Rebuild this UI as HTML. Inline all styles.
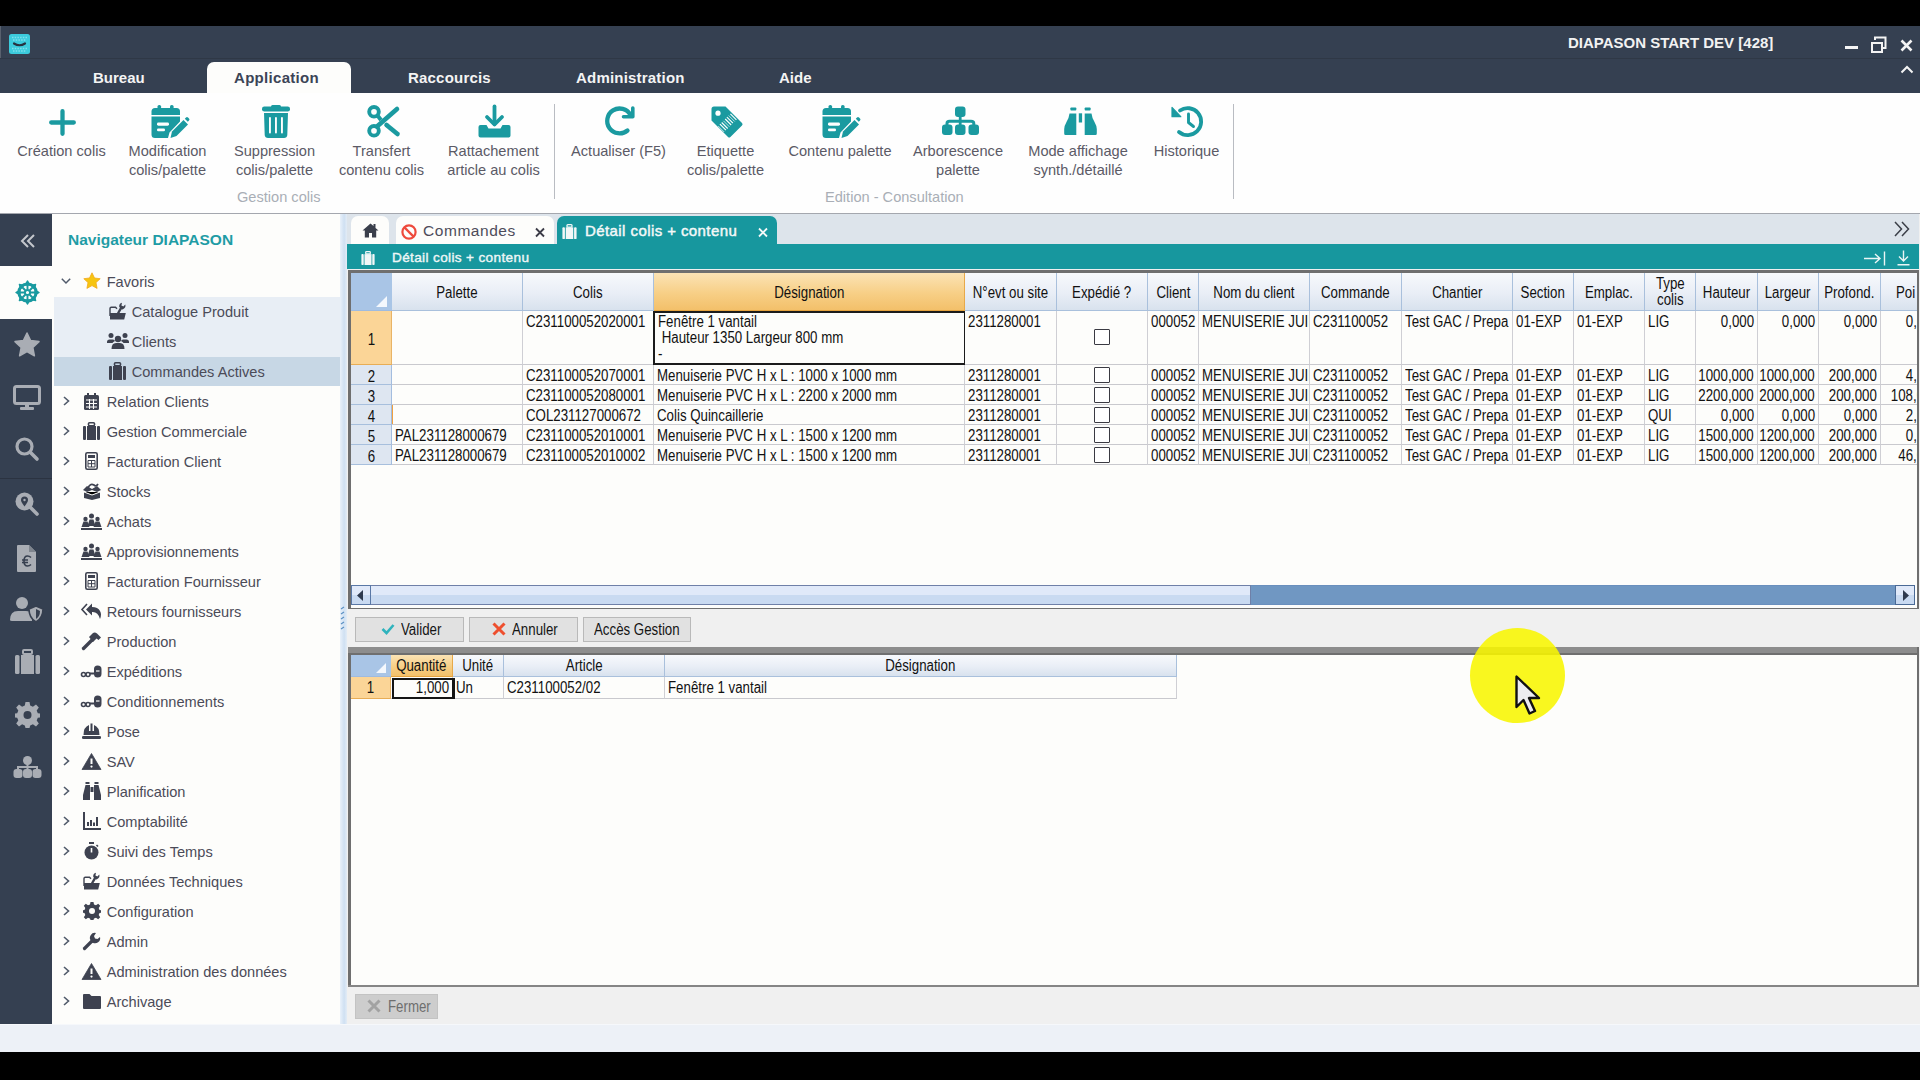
<!DOCTYPE html>
<html><head><meta charset="utf-8">
<style>
*{box-sizing:border-box;margin:0;padding:0}
html,body{width:1920px;height:1080px;overflow:hidden;background:#000;font-family:"Liberation Sans",sans-serif}
.a{position:absolute}
.t{position:absolute;white-space:nowrap;line-height:1}
svg{position:absolute;overflow:visible}
/* title */
#title{left:0;top:26px;width:1920px;height:32px;background:#354051}
#menu{left:0;top:58px;width:1920px;height:35px;background:#354051;border-top:1px solid #2f3846}
.mt{color:#f4f4f4;font-weight:bold;font-size:15px}
#ribbon{left:0;top:93px;width:1920px;height:121px;background:#fefefe;border-bottom:1px solid #a4a7ae}
.rl{color:#5b5a66;font-size:14.6px;text-align:center;line-height:19px;white-space:nowrap;position:absolute}
.rg{color:#a9aeb6;font-size:14.6px;position:absolute;white-space:nowrap;line-height:1}
.rsep{position:absolute;width:1px;background:#b9bcc2}
/* sidebar */
#side{left:0;top:214px;width:52px;height:810px;background:#354051}
#nav{left:52px;top:214px;width:288px;height:810px;background:#fdfdfb}
.nt{position:absolute;color:#4b4b58;font-size:14.6px;white-space:nowrap;line-height:1}
.chev{position:absolute;width:11px;height:11px}
/* content */
#split{left:340px;top:214px;width:7px;height:810px;background:linear-gradient(90deg,#e9f1fa,#cfe0f2 60%,#e3ecf6)}
#content{left:347px;top:214px;width:1573px;height:810px;background:#f0f0f0}
#tabs{left:347px;top:214px;width:1573px;height:30px;background:#dde4eb}
#thead{left:347px;top:244px;width:1573px;height:25px;background:#17979e}
.frame{position:absolute;border:3px solid #6e6e6e;border-right-width:2px;border-bottom-width:3px;background:#fdfdfb}
.gh{position:absolute;background:linear-gradient(#f7f9fc,#e9eef6 55%,#d8e2ee);border-right:1px solid #a9c0dc;border-bottom:1px solid #a9c0dc;color:#111;font-size:16px;text-align:center;white-space:nowrap;overflow:hidden}
.gho{position:absolute;background:linear-gradient(#fbe3b5,#f7cf86 55%,#f3c06a);border-right:1px solid #e7a94a;border-bottom:1px solid #e5a33e;color:#111;font-size:16px;text-align:center;white-space:nowrap;overflow:hidden}
.rh{position:absolute;background:#dee6f1;border-right:1px solid #a3bddf;border-bottom:1px solid #a7bfdd;color:#111;font-size:16px;text-align:center}
.rho{position:absolute;background:#fbd597;border-right:1px solid #e9b466;border-bottom:1px solid #e8ad55;color:#111;font-size:16px;text-align:center}
.c{position:absolute;border-right:1px solid #cfcfd4;border-bottom:1px solid #c9c9ce;color:#111;font-size:16px;white-space:nowrap;overflow:hidden;padding-left:3px;background:#fdfdfb}
.r{text-align:right;padding-right:3px;padding-left:0}
.btn{position:absolute;background:#e1e1e1;border:1px solid #b9b9b9;color:#111;font-size:13px;white-space:nowrap}
.sx{display:inline-block;transform:scaleX(.83)}
.cb{position:absolute;width:16px;height:16px;border:1.5px solid #3a3a42;border-radius:1px;background:#fff}
</style></head><body>

<!-- TITLE BAR -->
<div id="title" class="a"></div>
<div class="a" style="left:0;top:26px;width:1px;height:67px;background:#59616e"></div>
<svg style="left:9px;top:34px" width="21" height="20" viewBox="0 0 21 20"><rect x="0" y="0" width="21" height="20" rx="2.5" fill="#3ccbdc"/><path d="M3 3.5H18M4 6H17M3 14.5H18M4 17H17" stroke="#7fe0ec" stroke-width="1.3" stroke-dasharray="1.5 1.2"/><path d="M5 9.5Q10.5 13 16 9.5" stroke="#283240" stroke-width="2.2" fill="none" stroke-linecap="round"/></svg>
<div class="t" style="left:1568px;top:35px;color:#f2f2f2;font-weight:bold;font-size:15px">DIAPASON START DEV [428]</div>
<div class="a" style="left:1845px;top:46px;width:13px;height:3px;background:#f4f4f4"></div>
<svg style="left:1871px;top:36px" width="16" height="18" viewBox="0 0 16 18"><rect x="1" y="7" width="10" height="9" fill="none" stroke="#f4f4f4" stroke-width="2"/><path d="M4 4V1.5h10.5V12H11" fill="none" stroke="#f4f4f4" stroke-width="2"/></svg>
<svg style="left:1900px;top:39px" width="13" height="13" viewBox="0 0 13 13"><path d="M1.5 1.5L11.5 11.5M11.5 1.5L1.5 11.5" stroke="#f4f4f4" stroke-width="2.6"/></svg>

<!-- MENU -->
<div id="menu" class="a"></div>
<div class="a" style="left:207px;top:62px;width:144px;height:32px;background:#fdfdfb;border-radius:7px 7px 0 0"></div>
<div class="t mt" style="left:93px;top:70px">Bureau</div>
<div class="t mt" style="left:234px;top:70px;color:#3b4456;letter-spacing:0.3px">Application</div>
<div class="t mt" style="left:408px;top:70px;letter-spacing:0.2px">Raccourcis</div>
<div class="t mt" style="left:576px;top:70px;letter-spacing:0.2px">Administration</div>
<div class="t mt" style="left:779px;top:70px">Aide</div>
<svg style="left:1900px;top:65px" width="14" height="9" viewBox="0 0 14 9"><path d="M1.5 7.5L7 2l5.5 5.5" fill="none" stroke="#f4f4f4" stroke-width="2"/></svg>

<!-- RIBBON -->
<div id="ribbon" class="a"></div>
<svg style="left:49px;top:109px" width="27" height="27" viewBox="0 0 27 27"><path d="M13.5 2.2V24.8M2.2 13.5H24.8" stroke="#1a9aa0" stroke-width="4.3" stroke-linecap="round" fill="none"/></svg>
<svg style="left:151px;top:105px" width="38" height="33" viewBox="0 0 38 33"><rect x="6.5" y="0" width="3.6" height="6" rx="1.6" fill="#1a9aa0"/><rect x="19" y="0" width="3.6" height="6" rx="1.6" fill="#1a9aa0"/><path d="M0.5 6.5Q0.5 3 4 3H25.5Q29 3 29 6.5V10H0.5Z" fill="#1a9aa0"/><path d="M0.5 11.5H29V16.5L18.5 27.5L17 33H4Q0.5 33 0.5 29.5Z" fill="#1a9aa0"/><rect x="6" y="17.5" width="12" height="3.2" rx="1.4" fill="#fefefe"/><rect x="6" y="23.5" width="8" height="2.8" rx="1.3" fill="#fefefe"/><path d="M19.5 33L21 26.5L32.5 15L37 19.5L25.5 31Z" fill="#1a9aa0"/><path d="M33.8 13.7L35 12.5Q36 11.5 37 12.5L38 13.5Q39 14.5 38 15.5L36.8 16.7Z" fill="#1a9aa0"/></svg>
<svg style="left:262px;top:105px" width="28" height="33" viewBox="0 0 28 33"><rect x="9" y="0" width="10" height="3" rx="1.5" fill="#1a9aa0"/><rect x="0" y="1.5" width="28" height="5" rx="2.3" fill="#1a9aa0"/><path d="M2 8H26L25.3 30Q25 33 22 33H6Q3 33 2.7 30Z" fill="#1a9aa0"/><rect x="7" y="12" width="1.9" height="16.5" rx="0.9" fill="#fefefe"/><rect x="13" y="12" width="1.9" height="16.5" rx="0.9" fill="#fefefe"/><rect x="19" y="12" width="1.9" height="16.5" rx="0.9" fill="#fefefe"/></svg>
<svg style="left:367px;top:106px" width="32" height="32" viewBox="0 0 32 32"><circle cx="7" cy="5.8" r="4.8" stroke="#1a9aa0" stroke-width="3.9" fill="none"/><circle cx="7" cy="24.8" r="4.8" stroke="#1a9aa0" stroke-width="3.9" fill="none"/><path d="M10 20.5L30 3" stroke="#1a9aa0" stroke-width="4.6" stroke-linecap="round"/><path d="M10.5 9.5L14 14" stroke="#1a9aa0" stroke-width="4"/><path d="M19.5 19L30.5 28" stroke="#1a9aa0" stroke-width="4.6" stroke-linecap="round"/></svg>
<svg style="left:478px;top:105px" width="33" height="33" viewBox="0 0 33 33"><path d="M16.5 1.5V19" stroke="#1a9aa0" stroke-width="3.8" stroke-linecap="round"/><path d="M9 12L16.5 19.5L24 12" stroke="#1a9aa0" stroke-width="3.8" stroke-linecap="round" stroke-linejoin="round" fill="none"/><path d="M0.5 22Q0.5 20 2.5 20H8.5L10.5 23.5H22.5L24.5 20H30.5Q32.5 20 32.5 22V30.5Q32.5 32.5 30.5 32.5H2.5Q0.5 32.5 0.5 30.5Z" fill="#1a9aa0"/></svg>
<svg style="left:605px;top:106px" width="30" height="29" viewBox="0 0 30 29"><path d="M22.5 24.5A12.4 12.4 0 1 1 25.5 9" stroke="#1a9aa0" stroke-width="4.3" fill="none" stroke-linecap="round"/><path d="M27.8 2V10.8H18.5" stroke="#1a9aa0" stroke-width="3.6" fill="none" stroke-linecap="round" stroke-linejoin="round"/></svg>
<svg style="left:711px;top:106px" width="32" height="32" viewBox="0 0 32 32"><path d="M3 0.5H14.5L31 17Q32.2 18.2 31 19.4L19.4 31Q18.2 32.2 17 31L0.5 14.5V3Q0.5 0.5 3 0.5Z" fill="#1a9aa0"/><circle cx="7" cy="7.2" r="2.6" fill="#fefefe"/><path d="M7.2 20.0L13.2 26.0" stroke="#fefefe" stroke-width="0.7"/><path d="M8.9 18.2L14.9 24.2" stroke="#fefefe" stroke-width="1.1"/><path d="M10.7 16.5L16.7 22.5" stroke="#fefefe" stroke-width="1.1"/><path d="M12.4 14.8L18.4 20.8" stroke="#fefefe" stroke-width="0.7"/><path d="M14.2 13.0L20.2 19.0" stroke="#fefefe" stroke-width="1.1"/><path d="M15.9 11.2L21.9 17.2" stroke="#fefefe" stroke-width="1.1"/><path d="M17.7 9.5L23.7 15.5" stroke="#fefefe" stroke-width="0.7"/><path d="M19.4 7.8L25.4 13.8" stroke="#fefefe" stroke-width="1.1"/></svg>
<svg style="left:822px;top:105px" width="38" height="33" viewBox="0 0 38 33"><rect x="6.5" y="0" width="3.6" height="6" rx="1.6" fill="#1a9aa0"/><rect x="19" y="0" width="3.6" height="6" rx="1.6" fill="#1a9aa0"/><path d="M0.5 6.5Q0.5 3 4 3H25.5Q29 3 29 6.5V10H0.5Z" fill="#1a9aa0"/><path d="M0.5 11.5H29V16.5L18.5 27.5L17 33H4Q0.5 33 0.5 29.5Z" fill="#1a9aa0"/><rect x="6" y="17.5" width="12" height="3.2" rx="1.4" fill="#fefefe"/><rect x="6" y="23.5" width="8" height="2.8" rx="1.3" fill="#fefefe"/><path d="M19.5 33L21 26.5L32.5 15L37 19.5L25.5 31Z" fill="#1a9aa0"/><path d="M33.8 13.7L35 12.5Q36 11.5 37 12.5L38 13.5Q39 14.5 38 15.5L36.8 16.7Z" fill="#1a9aa0"/></svg>
<svg style="left:942px;top:106px" width="37" height="29" viewBox="0 0 37 29"><rect x="13" y="0.5" width="10.5" height="10.5" rx="3" fill="#1a9aa0"/><path d="M18.2 10V19" stroke="#1a9aa0" stroke-width="2.8"/><path d="M5 20V17.5Q5 15.3 7.5 15.3H29Q31.8 15.3 31.8 17.5V20" stroke="#1a9aa0" stroke-width="3" fill="none"/><rect x="0" y="18.5" width="10.5" height="10.5" rx="3" fill="#1a9aa0"/><rect x="13" y="18.5" width="10.5" height="10.5" rx="3" fill="#1a9aa0"/><rect x="26.5" y="18.5" width="10.5" height="10.5" rx="3" fill="#1a9aa0"/></svg>
<svg style="left:1064px;top:107px" width="33" height="28" viewBox="0 0 33 28"><rect x="6.4" y="0.5" width="5.9" height="3" rx="0.8" fill="#1a9aa0"/><rect x="20.7" y="0.5" width="5.9" height="3" rx="0.8" fill="#1a9aa0"/><path d="M5.5 6.5H12.3V28H1.5Q0.2 28 0.2 26.5V22Q0.2 19 2.5 15Q5 11 5.5 6.5Z" fill="#1a9aa0"/><path d="M27.5 6.5H20.7V28H31.5Q32.8 28 32.8 26.5V22Q32.8 19 30.5 15Q28 11 27.5 6.5Z" fill="#1a9aa0"/><rect x="14.8" y="6.3" width="3.3" height="9.2" fill="#1a9aa0"/></svg>
<svg style="left:1171px;top:105px" width="34" height="33" viewBox="0 0 34 33"><path d="M8 27A13.5 13.5 0 1 0 9 5.5" stroke="#1a9aa0" stroke-width="3.8" fill="none" stroke-linecap="round"/><path d="M1 2.5V11.7H9.8Z" fill="#1a9aa0" stroke="#1a9aa0" stroke-width="1.2" stroke-linejoin="round"/><path d="M17.5 9V17.5L22.5 21.5" stroke="#1a9aa0" stroke-width="2.9" fill="none" stroke-linecap="round" stroke-linejoin="round"/></svg>
<div class="rl" style="left:11px;top:142px;width:101px">Création colis</div>
<div class="rl" style="left:117px;top:142px;width:101px">Modification<br>colis/palette</div>
<div class="rl" style="left:224px;top:142px;width:101px">Suppression<br>colis/palette</div>
<div class="rl" style="left:331px;top:142px;width:101px">Transfert<br>contenu colis</div>
<div class="rl" style="left:443px;top:142px;width:101px">Rattachement<br>article au colis</div>
<div class="rg" style="left:237px;top:190px">Gestion colis</div>
<div class="rsep" style="left:554px;top:104px;height:95px"></div>
<div class="rl" style="left:568px;top:142px;width:101px">Actualiser (F5)</div>
<div class="rl" style="left:675px;top:142px;width:101px">Etiquette<br>colis/palette</div>
<div class="rl" style="left:780px;top:142px;width:120px">Contenu palette</div>
<div class="rl" style="left:905px;top:142px;width:106px">Arborescence<br>palette</div>
<div class="rl" style="left:1020px;top:142px;width:116px">Mode affichage<br>synth./détaillé</div>
<div class="rl" style="left:1136px;top:142px;width:101px">Historique</div>
<div class="rg" style="left:825px;top:190px">Edition - Consultation</div>
<div class="rsep" style="left:1233px;top:104px;height:95px"></div>

<!-- SIDEBAR -->
<div id="side" class="a"></div>
<div class="a" style="left:0;top:266px;width:52px;height:53px;background:#fdfdfb"></div>
<div class="a" style="left:0;top:478px;width:52px;height:1px;background:#2b3341"></div>
<svg style="left:21px;top:234px" width="14" height="14" viewBox="0 0 14 14"><path d="M7 1L1 7L7 13M13 1L7 7L13 13" stroke="#c4c7cc" stroke-width="2" fill="none"/></svg>
<svg style="left:15px;top:280px" width="25" height="25" viewBox="0 0 25 25"><circle cx="12.5" cy="12.5" r="8.6" stroke="#1a9aa0" stroke-width="3" fill="none"/><path d="M20.14 10.14L24.10 12.50L20.14 14.86Z" fill="#1a9aa0" stroke="#1a9aa0" stroke-width="1.2" stroke-linejoin="round"/><path d="M19.58 16.23L20.70 20.70L16.23 19.58Z" fill="#1a9aa0" stroke="#1a9aa0" stroke-width="1.2" stroke-linejoin="round"/><path d="M14.86 20.14L12.50 24.10L10.14 20.14Z" fill="#1a9aa0" stroke="#1a9aa0" stroke-width="1.2" stroke-linejoin="round"/><path d="M8.77 19.58L4.30 20.70L5.42 16.23Z" fill="#1a9aa0" stroke="#1a9aa0" stroke-width="1.2" stroke-linejoin="round"/><path d="M4.86 14.86L0.90 12.50L4.86 10.14Z" fill="#1a9aa0" stroke="#1a9aa0" stroke-width="1.2" stroke-linejoin="round"/><path d="M5.42 8.77L4.30 4.30L8.77 5.42Z" fill="#1a9aa0" stroke="#1a9aa0" stroke-width="1.2" stroke-linejoin="round"/><path d="M10.14 4.86L12.50 0.90L14.86 4.86Z" fill="#1a9aa0" stroke="#1a9aa0" stroke-width="1.2" stroke-linejoin="round"/><path d="M16.23 5.42L20.70 4.30L19.58 8.77Z" fill="#1a9aa0" stroke="#1a9aa0" stroke-width="1.2" stroke-linejoin="round"/><path d="M15.70 12.50L21.00 12.50M14.76 14.76L18.51 18.51M12.50 15.70L12.50 21.00M10.24 14.76L6.49 18.51M9.30 12.50L4.00 12.50M10.24 10.24L6.49 6.49M12.50 9.30L12.50 4.00M14.76 10.24L18.51 6.49" stroke="#1a9aa0" stroke-width="1.9"/><circle cx="12.5" cy="12.5" r="2.6" stroke="#1a9aa0" stroke-width="2" fill="none"/></svg>
<svg style="left:14px;top:332px" width="26" height="26" viewBox="0 0 26 26"><path d="M13 1L16.6 8.6L25 9.6L18.8 15.4L20.4 23.8L13 19.7L5.6 23.8L7.2 15.4L1 9.6L9.4 8.6Z" fill="#a9adb4" stroke="#a9adb4" stroke-width="1.5" stroke-linejoin="round"/></svg>
<svg style="left:13px;top:385px" width="28" height="25" viewBox="0 0 28 25"><rect x="1.5" y="1.5" width="25" height="17" rx="2" stroke="#a9adb4" stroke-width="3" fill="none"/><rect x="12" y="19" width="4" height="3" fill="#a9adb4"/><rect x="7" y="22" width="14" height="3" rx="1" fill="#a9adb4"/></svg>
<svg style="left:15px;top:437px" width="24" height="25" viewBox="0 0 24 25"><circle cx="9.5" cy="9.5" r="7.5" stroke="#a9adb4" stroke-width="3.2" fill="none"/><path d="M15.5 15.5L22 22" stroke="#a9adb4" stroke-width="3.6" stroke-linecap="round"/></svg>
<svg style="left:15px;top:492px" width="24" height="25" viewBox="0 0 24 25"><circle cx="9.5" cy="9.5" r="9" fill="#a9adb4"/><path d="M15.5 15.5L22 22" stroke="#a9adb4" stroke-width="3.6" stroke-linecap="round"/><path d="M9.5 14.5C7 11 6 9.5 6 8A3.5 3.5 0 0 1 13 8C13 9.5 12 11 9.5 14.5Z" fill="#363f4f"/><circle cx="9.5" cy="8" r="1.2" fill="#a9adb4"/></svg>
<svg style="left:17px;top:545px" width="19" height="27" viewBox="0 0 19 27"><path d="M0 1Q0 0 1 0H12L19 7V26Q19 27 18 27H1Q0 27 0 26Z" fill="#a9adb4"/><path d="M12 0V7H19" fill="#7f858e"/><path d="M14 12.5Q12.5 11 10.5 11Q7 11 7 16Q7 21 10.5 21Q12.5 21 14 19.5M5 15H11M5 17.5H11" stroke="#363f4f" stroke-width="1.6" fill="none"/></svg>
<svg style="left:10px;top:597px" width="32" height="25" viewBox="0 0 32 25"><circle cx="12" cy="6" r="6" fill="#a9adb4"/><path d="M0 23Q0 14 8 14H16Q20 14 22 16V24H2Q0 24 0 23Z" fill="#a9adb4"/><path d="M26 9L33 12Q33 21 26 25Q19 21 19 12Z" fill="#a9adb4" stroke="#363f4f" stroke-width="1.6"/><path d="M26 12V22Q30 19.5 30 14Z" fill="#363f4f"/></svg>
<svg style="left:15px;top:650px" width="25" height="24" viewBox="0 0 25 24"><rect x="0" y="5" width="4.5" height="19" rx="1.5" fill="#a9adb4"/><rect x="20.5" y="5" width="4.5" height="19" rx="1.5" fill="#a9adb4"/><path d="M6 5H19V24H6Z" fill="#a9adb4"/><rect x="8" y="0" width="9" height="4" rx="1" fill="none" stroke="#a9adb4" stroke-width="2"/></svg>
<svg style="left:15px;top:702px" width="25" height="26" viewBox="0 0 25 26"><path d="M10.5 0H14.5L15.2 3.6L17.9 4.7L21 2.6L23.8 5.4L21.7 8.5L22.8 11.2L25 11.5V15.5L22.8 15.8L21.7 18.5L23.8 21.6L21 24.4L17.9 22.3L15.2 23.4L14.5 26H10.5L9.8 23.4L7.1 22.3L4 24.4L1.2 21.6L3.3 18.5L2.2 15.8L0 15.5V11.5L2.2 11.2L3.3 8.5L1.2 5.4L4 2.6L7.1 4.7L9.8 3.6Z" fill="#a9adb4"/><circle cx="12.5" cy="13" r="4" fill="#363f4f"/></svg>
<svg style="left:13px;top:756px" width="29" height="22" viewBox="0 0 29 22"><circle cx="14.5" cy="4.5" r="4.5" fill="#a9adb4"/><path d="M14.5 8V12M5 16V11H24V16M14.5 11V16" stroke="#a9adb4" stroke-width="2" fill="none"/><rect x="0.5" y="13" width="9" height="9" rx="3" fill="#a9adb4"/><rect x="10" y="13" width="9" height="9" rx="3" fill="#a9adb4"/><rect x="19.5" y="13" width="9" height="9" rx="3" fill="#a9adb4"/></svg>

<!-- NAV -->
<div id="nav" class="a"></div>
<div class="t" style="left:68px;top:232px;color:#1f9ca5;font-weight:bold;font-size:15.5px">Navigateur DIAPASON</div>
<div class="a" style="left:54px;top:297px;width:286px;height:60px;background:#e8eef5"></div>
<div class="a" style="left:54px;top:357px;width:286px;height:29px;background:#c7d7e5"></div>
<svg style="left:82.5px;top:272.4px" width="18" height="18" viewBox="0 0 18 18"><path d="M9 0.8L11.5 6L17.2 6.7L13 10.6L14.1 16.4L9 13.6L3.9 16.4L5 10.6L0.8 6.7L6.5 6Z" fill="#f6c510" stroke="#f1a81c" stroke-width="0.8" stroke-linejoin="round"/></svg>
<svg style="left:60.6px;top:277.5px" width="10" height="6" viewBox="0 0 10 6"><path d="M0.8 0.8L5 5L9.2 0.8" stroke="#505a6a" stroke-width="1.5" fill="none"/></svg>
<div class="nt" style="left:106.7px;top:274.5px">Favoris</div>
<svg style="left:109px;top:302.4px" width="17" height="18" viewBox="0 0 17 18"><path d="M1 14V6.5Q1 5.2 2.3 5.2H6.5L8 6.8" stroke="#3e4250" stroke-width="1.4" fill="none"/><path d="M1 11H16.8L15.2 17.5H1Z" fill="#3e4250"/><path d="M9.2 11L12.6 5.2" stroke="#3e4250" stroke-width="2.4" stroke-linecap="round"/><path d="M10.2 4.8Q10 1.5 13 0.8L12.4 3.6L14.3 4.6L16.3 2.6Q17.2 5.8 14 7.3Q12 8 10.2 4.8Z" fill="#3e4250"/></svg>
<div class="nt" style="left:131.7px;top:304.5px">Catalogue Produit</div>
<svg style="left:107px;top:332.4px" width="22" height="18" viewBox="0 0 22 18"><circle cx="4" cy="3.5" r="2.5" fill="#3e4250"/><circle cx="18" cy="3.5" r="2.5" fill="#3e4250"/><circle cx="11" cy="7" r="3.2" fill="#3e4250"/><path d="M0 10Q0 7.5 2.5 7.5H6Q7.5 7.5 8 9Q6 10 5.5 11H0Z" fill="#3e4250"/><path d="M22 10Q22 7.5 19.5 7.5H16Q14.5 7.5 14 9Q16 10 16.5 11H22Z" fill="#3e4250"/><path d="M4.5 17Q4.5 11 9 11H13Q17.5 11 17.5 17Z" fill="#3e4250"/></svg>
<div class="nt" style="left:131.7px;top:334.5px">Clients</div>
<svg style="left:109px;top:362.4px" width="17" height="18" viewBox="0 0 17 18"><rect x="0" y="4" width="3" height="14" rx="1" fill="#3e4250"/><rect x="14" y="4" width="3" height="14" rx="1" fill="#3e4250"/><path d="M4 4H13V18H4Z" fill="#3e4250"/><rect x="5.5" y="0.8" width="6" height="3" rx="1" fill="none" stroke="#3e4250" stroke-width="1.6"/></svg>
<div class="nt" style="left:131.7px;top:364.5px">Commandes Actives</div>
<svg style="left:84.0px;top:392.9px" width="15" height="17" viewBox="0 0 15 17"><rect x="3" y="0" width="2" height="3" fill="#3e4250"/><rect x="10" y="0" width="2" height="3" fill="#3e4250"/><rect x="0" y="2" width="15" height="15" rx="1.5" fill="#3e4250"/><path d="M2 7H13M2 10.5H13M2 14H13M5.5 6V16M9.5 6V16" stroke="#fdfdfb" stroke-width="1.1"/></svg>
<svg style="left:62.5px;top:396.4px" width="7" height="10" viewBox="0 0 7 10"><path d="M1 1L5.5 5L1 9" stroke="#505a6a" stroke-width="1.6" fill="none"/></svg>
<div class="nt" style="left:106.7px;top:394.5px">Relation Clients</div>
<svg style="left:83.0px;top:422.4px" width="17" height="18" viewBox="0 0 17 18"><rect x="0" y="4" width="3" height="14" rx="1" fill="#3e4250"/><rect x="14" y="4" width="3" height="14" rx="1" fill="#3e4250"/><path d="M4 4H13V18H4Z" fill="#3e4250"/><rect x="5.5" y="0.8" width="6" height="3" rx="1" fill="none" stroke="#3e4250" stroke-width="1.6"/></svg>
<svg style="left:62.5px;top:426.4px" width="7" height="10" viewBox="0 0 7 10"><path d="M1 1L5.5 5L1 9" stroke="#505a6a" stroke-width="1.6" fill="none"/></svg>
<div class="nt" style="left:106.7px;top:424.5px">Gestion Commerciale</div>
<svg style="left:85.0px;top:452.4px" width="13" height="18" viewBox="0 0 13 18"><rect x="0.8" y="0.8" width="11.4" height="16.4" rx="1.5" fill="none" stroke="#3e4250" stroke-width="1.6"/><rect x="3" y="3" width="7" height="3" fill="#3e4250"/><path d="M3 8.5H10V15H3Z" fill="none" stroke="#3e4250" stroke-width="1"/><path d="M6.5 8.5V15M3 11.7H10" stroke="#3e4250" stroke-width="1"/></svg>
<svg style="left:62.5px;top:456.4px" width="7" height="10" viewBox="0 0 7 10"><path d="M1 1L5.5 5L1 9" stroke="#505a6a" stroke-width="1.6" fill="none"/></svg>
<div class="nt" style="left:106.7px;top:454.5px">Facturation Client</div>
<svg style="left:81.5px;top:482.9px" width="20" height="17" viewBox="0 0 20 17"><path d="M1 7L5 3L10 6L15 3L19 7L15 9L10 7L5 9Z" fill="#3e4250"/><path d="M2 9L10 12L18 9V15L10 17L2 15Z" fill="#3e4250"/><path d="M6 5Q8 0 12 2Q14 4 16 1" stroke="#3e4250" stroke-width="1.8" fill="none"/><path d="M2 9L10 12L18 9" stroke="#fdfdfb" stroke-width="1"/></svg>
<svg style="left:62.5px;top:486.4px" width="7" height="10" viewBox="0 0 7 10"><path d="M1 1L5.5 5L1 9" stroke="#505a6a" stroke-width="1.6" fill="none"/></svg>
<div class="nt" style="left:106.7px;top:484.5px">Stocks</div>
<svg style="left:81.0px;top:512.9px" width="21" height="17" viewBox="0 0 21 17"><circle cx="10.5" cy="3" r="2.5" fill="#3e4250"/><circle cx="4.5" cy="6" r="2.2" fill="#3e4250"/><circle cx="16.5" cy="6" r="2.2" fill="#3e4250"/><path d="M6.5 13L8.5 6.5H12.5L14.5 13Z" fill="#3e4250"/><path d="M0.5 14L2.5 8.5H6.5L8.5 14Z" fill="#3e4250"/><path d="M12.5 14L14.5 8.5H18.5L20.5 14Z" fill="#3e4250"/><rect x="0" y="15" width="21" height="2" fill="#3e4250"/></svg>
<svg style="left:62.5px;top:516.4px" width="7" height="10" viewBox="0 0 7 10"><path d="M1 1L5.5 5L1 9" stroke="#505a6a" stroke-width="1.6" fill="none"/></svg>
<div class="nt" style="left:106.7px;top:514.5px">Achats</div>
<svg style="left:81.0px;top:542.9px" width="21" height="17" viewBox="0 0 21 17"><circle cx="10.5" cy="3" r="2.5" fill="#3e4250"/><circle cx="4.5" cy="6" r="2.2" fill="#3e4250"/><circle cx="16.5" cy="6" r="2.2" fill="#3e4250"/><path d="M6.5 13L8.5 6.5H12.5L14.5 13Z" fill="#3e4250"/><path d="M0.5 14L2.5 8.5H6.5L8.5 14Z" fill="#3e4250"/><path d="M12.5 14L14.5 8.5H18.5L20.5 14Z" fill="#3e4250"/><rect x="0" y="15" width="21" height="2" fill="#3e4250"/></svg>
<svg style="left:62.5px;top:546.4px" width="7" height="10" viewBox="0 0 7 10"><path d="M1 1L5.5 5L1 9" stroke="#505a6a" stroke-width="1.6" fill="none"/></svg>
<div class="nt" style="left:106.7px;top:544.5px">Approvisionnements</div>
<svg style="left:85.0px;top:572.4px" width="13" height="18" viewBox="0 0 13 18"><rect x="0.8" y="0.8" width="11.4" height="16.4" rx="1.5" fill="none" stroke="#3e4250" stroke-width="1.6"/><rect x="3" y="3" width="7" height="3" fill="#3e4250"/><path d="M3 8.5H10V15H3Z" fill="none" stroke="#3e4250" stroke-width="1"/><path d="M6.5 8.5V15M3 11.7H10" stroke="#3e4250" stroke-width="1"/></svg>
<svg style="left:62.5px;top:576.4px" width="7" height="10" viewBox="0 0 7 10"><path d="M1 1L5.5 5L1 9" stroke="#505a6a" stroke-width="1.6" fill="none"/></svg>
<div class="nt" style="left:106.7px;top:574.5px">Facturation Fournisseur</div>
<svg style="left:81.5px;top:602.4px" width="20" height="18" viewBox="0 0 20 18"><path d="M5 2L0 7.5L5 13" stroke="#3e4250" stroke-width="1.6" fill="none"/><path d="M10 1.5L4 7.5L10 13.5V10Q16 9.5 18 17Q20 12 18 9Q16 5 10 5Z" fill="#3e4250"/></svg>
<svg style="left:62.5px;top:606.4px" width="7" height="10" viewBox="0 0 7 10"><path d="M1 1L5.5 5L1 9" stroke="#505a6a" stroke-width="1.6" fill="none"/></svg>
<div class="nt" style="left:106.7px;top:604.5px">Retours fournisseurs</div>
<svg style="left:82.0px;top:632.4px" width="19" height="18" viewBox="0 0 19 18"><path d="M1.5 16.5L10 8" stroke="#3e4250" stroke-width="3.4" stroke-linecap="round"/><path d="M7 5L11 1Q13 0 15 1.5L19 5.5L16.5 8L14.5 6.5L11 10Z" fill="#3e4250"/></svg>
<svg style="left:62.5px;top:636.4px" width="7" height="10" viewBox="0 0 7 10"><path d="M1 1L5.5 5L1 9" stroke="#505a6a" stroke-width="1.6" fill="none"/></svg>
<div class="nt" style="left:106.7px;top:634.5px">Production</div>
<svg style="left:81.0px;top:664.9px" width="21" height="13" viewBox="0 0 21 13"><circle cx="2.5" cy="9.5" r="2" stroke="#3e4250" stroke-width="1.6" fill="none"/><circle cx="7" cy="9.5" r="2" stroke="#3e4250" stroke-width="1.6" fill="none"/><path d="M9 8.5H14" stroke="#3e4250" stroke-width="2"/><path d="M13 4Q13 0.5 16.5 0.5Q20.5 0.5 20.5 4V9Q20.5 12.5 16.5 12.5Q13 12.5 13 9Z" fill="#3e4250"/><path d="M15 6H18.5" stroke="#fdfdfb" stroke-width="1.2"/></svg>
<svg style="left:62.5px;top:666.4px" width="7" height="10" viewBox="0 0 7 10"><path d="M1 1L5.5 5L1 9" stroke="#505a6a" stroke-width="1.6" fill="none"/></svg>
<div class="nt" style="left:106.7px;top:664.5px">Expéditions</div>
<svg style="left:81.0px;top:694.9px" width="21" height="13" viewBox="0 0 21 13"><circle cx="2.5" cy="9.5" r="2" stroke="#3e4250" stroke-width="1.6" fill="none"/><circle cx="7" cy="9.5" r="2" stroke="#3e4250" stroke-width="1.6" fill="none"/><path d="M9 8.5H14" stroke="#3e4250" stroke-width="2"/><path d="M13 4Q13 0.5 16.5 0.5Q20.5 0.5 20.5 4V9Q20.5 12.5 16.5 12.5Q13 12.5 13 9Z" fill="#3e4250"/><path d="M15 6H18.5" stroke="#fdfdfb" stroke-width="1.2"/></svg>
<svg style="left:62.5px;top:696.4px" width="7" height="10" viewBox="0 0 7 10"><path d="M1 1L5.5 5L1 9" stroke="#505a6a" stroke-width="1.6" fill="none"/></svg>
<div class="nt" style="left:106.7px;top:694.5px">Conditionnements</div>
<svg style="left:82.0px;top:722.4px" width="19" height="18" viewBox="0 0 19 18"><path d="M1.5 13Q1.5 5 7 3V9H8.5V1.5H10.5V9H12V3Q17.5 5 17.5 13Z" fill="#3e4250"/><rect x="0" y="14" width="19" height="3" rx="1.3" fill="#3e4250"/></svg>
<svg style="left:62.5px;top:726.4px" width="7" height="10" viewBox="0 0 7 10"><path d="M1 1L5.5 5L1 9" stroke="#505a6a" stroke-width="1.6" fill="none"/></svg>
<div class="nt" style="left:106.7px;top:724.5px">Pose</div>
<svg style="left:82.0px;top:752.9px" width="19" height="17" viewBox="0 0 19 17"><path d="M9.5 0.5L19 16.5H0Z" fill="#3e4250" stroke="#3e4250" stroke-width="0.8" stroke-linejoin="round"/><path d="M9.5 5.5V11" stroke="#fdfdfb" stroke-width="2"/><circle cx="9.5" cy="13.6" r="1.1" fill="#fdfdfb"/></svg>
<svg style="left:62.5px;top:756.4px" width="7" height="10" viewBox="0 0 7 10"><path d="M1 1L5.5 5L1 9" stroke="#505a6a" stroke-width="1.6" fill="none"/></svg>
<div class="nt" style="left:106.7px;top:754.5px">SAV</div>
<svg style="left:82.5px;top:782.4px" width="18" height="18" viewBox="0 0 18 18"><rect x="2.5" y="0" width="4" height="2" fill="#3e4250"/><rect x="11.5" y="0" width="4" height="2" fill="#3e4250"/><path d="M2.5 3H7V18H0V13Z" fill="#3e4250"/><path d="M11 3H15.5L18 13V18H11Z" fill="#3e4250"/><rect x="7.5" y="5" width="3" height="5" fill="#3e4250"/></svg>
<svg style="left:62.5px;top:786.4px" width="7" height="10" viewBox="0 0 7 10"><path d="M1 1L5.5 5L1 9" stroke="#505a6a" stroke-width="1.6" fill="none"/></svg>
<div class="nt" style="left:106.7px;top:784.5px">Planification</div>
<svg style="left:82.5px;top:812.4px" width="18" height="18" viewBox="0 0 18 18"><path d="M1 0V17H18" stroke="#3e4250" stroke-width="2" fill="none"/><path d="M5 14V10M8 14V8M11 14V10.5M14 14V5" stroke="#3e4250" stroke-width="2"/></svg>
<svg style="left:62.5px;top:816.4px" width="7" height="10" viewBox="0 0 7 10"><path d="M1 1L5.5 5L1 9" stroke="#505a6a" stroke-width="1.6" fill="none"/></svg>
<div class="nt" style="left:106.7px;top:814.5px">Comptabilité</div>
<svg style="left:84.0px;top:842.4px" width="15" height="18" viewBox="0 0 15 18"><rect x="5" y="0" width="5" height="2" fill="#3e4250"/><circle cx="7.5" cy="10.5" r="7" fill="#3e4250"/><path d="M7.5 6V10.5" stroke="#fdfdfb" stroke-width="1.6"/><path d="M12.5 3L14 4.5" stroke="#3e4250" stroke-width="1.6"/></svg>
<svg style="left:62.5px;top:846.4px" width="7" height="10" viewBox="0 0 7 10"><path d="M1 1L5.5 5L1 9" stroke="#505a6a" stroke-width="1.6" fill="none"/></svg>
<div class="nt" style="left:106.7px;top:844.5px">Suivi des Temps</div>
<svg style="left:83.0px;top:872.4px" width="17" height="18" viewBox="0 0 17 18"><path d="M1 14V6.5Q1 5.2 2.3 5.2H6.5L8 6.8" stroke="#3e4250" stroke-width="1.4" fill="none"/><path d="M1 11H16.8L15.2 17.5H1Z" fill="#3e4250"/><path d="M9.2 11L12.6 5.2" stroke="#3e4250" stroke-width="2.4" stroke-linecap="round"/><path d="M10.2 4.8Q10 1.5 13 0.8L12.4 3.6L14.3 4.6L16.3 2.6Q17.2 5.8 14 7.3Q12 8 10.2 4.8Z" fill="#3e4250"/></svg>
<svg style="left:62.5px;top:876.4px" width="7" height="10" viewBox="0 0 7 10"><path d="M1 1L5.5 5L1 9" stroke="#505a6a" stroke-width="1.6" fill="none"/></svg>
<div class="nt" style="left:106.7px;top:874.5px">Données Techniques</div>
<svg style="left:82.5px;top:902.4px" width="18" height="18" viewBox="0 0 18 18"><path d="M7.5 0H10.5L11 2.5L13 3.3L15.2 1.8L17.2 3.8L15.7 6L16.5 8L18 8.2V10.8L16.5 11L15.7 13L17.2 15.2L15.2 17.2L13 15.7L11 16.5L10.5 18H7.5L7 16.5L5 15.7L2.8 17.2L0.8 15.2L2.3 13L1.5 11L0 10.8V8.2L1.5 8L2.3 6L0.8 3.8L2.8 1.8L5 3.3L7 2.5Z" fill="#3e4250"/><circle cx="9" cy="9" r="3" fill="#fdfdfb"/></svg>
<svg style="left:62.5px;top:906.4px" width="7" height="10" viewBox="0 0 7 10"><path d="M1 1L5.5 5L1 9" stroke="#505a6a" stroke-width="1.6" fill="none"/></svg>
<div class="nt" style="left:106.7px;top:904.5px">Configuration</div>
<svg style="left:82.5px;top:932.4px" width="18" height="18" viewBox="0 0 18 18"><path d="M1.5 16.5L9 9" stroke="#3e4250" stroke-width="3.2" stroke-linecap="round"/><path d="M8 9A5 5 0 0 1 13 1L11 4L12 6.5L14.5 7L17 5A5 5 0 0 1 9.5 10.5Z" fill="#3e4250"/></svg>
<svg style="left:62.5px;top:936.4px" width="7" height="10" viewBox="0 0 7 10"><path d="M1 1L5.5 5L1 9" stroke="#505a6a" stroke-width="1.6" fill="none"/></svg>
<div class="nt" style="left:106.7px;top:934.5px">Admin</div>
<svg style="left:82.0px;top:962.9px" width="19" height="17" viewBox="0 0 19 17"><path d="M9.5 0.5L19 16.5H0Z" fill="#3e4250" stroke="#3e4250" stroke-width="0.8" stroke-linejoin="round"/><path d="M9.5 5.5V11" stroke="#fdfdfb" stroke-width="2"/><circle cx="9.5" cy="13.6" r="1.1" fill="#fdfdfb"/></svg>
<svg style="left:62.5px;top:966.4px" width="7" height="10" viewBox="0 0 7 10"><path d="M1 1L5.5 5L1 9" stroke="#505a6a" stroke-width="1.6" fill="none"/></svg>
<div class="nt" style="left:106.7px;top:964.5px">Administration des données</div>
<svg style="left:82.5px;top:993.9px" width="18" height="15" viewBox="0 0 18 15"><path d="M0 1Q0 0 1 0H6.5L8.5 2H17Q18 2 18 3V14Q18 15 17 15H1Q0 15 0 14Z" fill="#3e4250"/></svg>
<svg style="left:62.5px;top:996.4px" width="7" height="10" viewBox="0 0 7 10"><path d="M1 1L5.5 5L1 9" stroke="#505a6a" stroke-width="1.6" fill="none"/></svg>
<div class="nt" style="left:106.7px;top:994.5px">Archivage</div>

<!-- CONTENT -->
<div id="content" class="a"></div>
<div id="split" class="a"></div>
<div id="tabs" class="a"></div>
<div id="thead" class="a"></div>
<div class="a" style="left:351px;top:216px;width:38px;height:28px;background:#fdfdfb;border-radius:7px 7px 0 0"></div>
<svg style="left:362px;top:223px" width="17" height="15" viewBox="0 0 17 15"><path d="M8.5 0.5L0.5 7.5H2.8V14.5H7V10H10V14.5H14.2V7.5H16.5L13.5 4.9V1H11.5V3.1Z" fill="#3a3f4b"/></svg>
<div class="a" style="left:396px;top:216px;width:158px;height:28px;background:#fdfdfb;border-radius:7px 7px 0 0"></div>
<svg style="left:401px;top:224px" width="16" height="16" viewBox="0 0 16 16"><circle cx="8" cy="8" r="6.6" stroke="#ee4a3c" stroke-width="2.2" fill="none"/><path d="M3.4 3.4L12.6 12.6" stroke="#ee4a3c" stroke-width="2.2"/></svg>
<div class="t" style="left:423px;top:223px;font-size:15.5px;color:#4d4c5a;letter-spacing:0.55px">Commandes</div>
<svg style="left:535px;top:228px" width="10" height="9" viewBox="0 0 10 9"><path d="M1 0.5L9 8.5M9 0.5L1 8.5" stroke="#3c3c48" stroke-width="1.8"/></svg>
<div class="a" style="left:557px;top:216px;width:220px;height:30px;background:#17979e;border-radius:7px 7px 0 0"></div>
<svg style="left:562px;top:224px" width="15" height="15" viewBox="0 0 17 18"><rect x="0" y="4" width="3" height="14" rx="1" fill="#f2f7f7"/><rect x="14" y="4" width="3" height="14" rx="1" fill="#f2f7f7"/><path d="M4 4H13V18H4Z" fill="#f2f7f7"/><rect x="5.5" y="0.8" width="6" height="3" rx="1" fill="none" stroke="#f2f7f7" stroke-width="1.6"/></svg>
<div class="t" style="left:585px;top:223px;font-size:15px;color:#f4f8f8;letter-spacing:0.42px;-webkit-text-stroke:0.45px #f4f8f8">Détail colis + contenu</div>
<svg style="left:758px;top:228px" width="10" height="9" viewBox="0 0 10 9"><path d="M1 0.5L9 8.5M9 0.5L1 8.5" stroke="#f4f8f8" stroke-width="1.8"/></svg>
<svg style="left:1894px;top:221px" width="16" height="16" viewBox="0 0 16 16"><path d="M1 1L7.5 8L1 15M8 1L14.5 8L8 15" stroke="#3b3f48" stroke-width="1.5" fill="none"/></svg>
<svg style="left:361px;top:251px" width="14" height="14" viewBox="0 0 17 18"><rect x="0" y="4" width="3" height="14" rx="1" fill="#f2f7f7"/><rect x="14" y="4" width="3" height="14" rx="1" fill="#f2f7f7"/><path d="M4 4H13V18H4Z" fill="#f2f7f7"/><rect x="5.5" y="0.8" width="6" height="3" rx="1" fill="none" stroke="#f2f7f7" stroke-width="1.6"/></svg>
<div class="t" style="left:392px;top:251px;font-size:13.6px;color:#eef6f6;letter-spacing:0.35px;-webkit-text-stroke:0.4px #eef6f6">Détail colis + contenu</div>
<svg style="left:1864px;top:251px" width="23" height="15" viewBox="0 0 23 15"><path d="M0 7.5H16M11 3L16 7.5L11 12M20.5 0.5V14.5" stroke="#eaf5f5" stroke-width="1.4" fill="none"/></svg>
<svg style="left:1897px;top:250px" width="13" height="16" viewBox="0 0 13 16"><path d="M6.5 0.5V11M2 6.5L6.5 11L11 6.5M0.5 14.8H12.5" stroke="#eaf5f5" stroke-width="1.4" fill="none"/></svg>
<div class="a" style="left:348px;top:270px;width:1571px;height:339px;background:#6f6f6f"></div>
<div class="a" style="left:351px;top:273px;width:1566px;height:335px;background:#fdfdfb"></div>
<div class="a" style="left:351px;top:273px;width:41px;height:38px;background:#a9c5e6;border-bottom:1px solid #9fbbe0"></div>
<svg style="left:376px;top:296px" width="11" height="11" viewBox="0 0 11 11"><path d="M11 0V11H0Z" fill="#f4f8fd"/></svg>
<div class="gh" style="left:392px;top:273px;width:131px;height:38px;line-height:37px;padding-top:1px"><span class="sx" style="transform-origin:center center">Palette</span></div>
<div class="gh" style="left:523px;top:273px;width:131px;height:38px;line-height:37px;padding-top:1px"><span class="sx" style="transform-origin:center center">Colis</span></div>
<div class="gho" style="left:654px;top:273px;width:311px;height:38px;line-height:37px;padding-top:1px"><span class="sx" style="transform-origin:center center">Désignation</span></div>
<div class="gh" style="left:965px;top:273px;width:92px;height:38px;line-height:37px;padding-top:1px"><span class="sx" style="transform-origin:center center">N°evt ou site</span></div>
<div class="gh" style="left:1057px;top:273px;width:91px;height:38px;line-height:37px;padding-top:1px"><span class="sx" style="transform-origin:center center">Expédié ?</span></div>
<div class="gh" style="left:1148px;top:273px;width:51px;height:38px;line-height:37px;padding-top:1px"><span class="sx" style="transform-origin:center center">Client</span></div>
<div class="gh" style="left:1199px;top:273px;width:111px;height:38px;line-height:37px;padding-top:1px"><span class="sx" style="transform-origin:center center">Nom du client</span></div>
<div class="gh" style="left:1310px;top:273px;width:92px;height:38px;line-height:37px;padding-top:1px"><span class="sx" style="transform-origin:center center">Commande</span></div>
<div class="gh" style="left:1402px;top:273px;width:111px;height:38px;line-height:37px;padding-top:1px"><span class="sx" style="transform-origin:center center">Chantier</span></div>
<div class="gh" style="left:1513px;top:273px;width:61px;height:38px;line-height:37px;padding-top:1px"><span class="sx" style="transform-origin:center center">Section</span></div>
<div class="gh" style="left:1574px;top:273px;width:71px;height:38px;line-height:37px;padding-top:1px"><span class="sx" style="transform-origin:center center">Emplac.</span></div>
<div class="gh" style="left:1645px;top:273px;width:51px;height:38px;line-height:16px;padding-top:3px"><span class="sx" style="transform-origin:center center">Type<br>colis</span></div>
<div class="gh" style="left:1696px;top:273px;width:62px;height:38px;line-height:37px;padding-top:1px"><span class="sx" style="transform-origin:center center">Hauteur</span></div>
<div class="gh" style="left:1758px;top:273px;width:61px;height:38px;line-height:37px;padding-top:1px"><span class="sx" style="transform-origin:center center">Largeur</span></div>
<div class="gh" style="left:1819px;top:273px;width:62px;height:38px;line-height:37px;padding-top:1px"><span class="sx" style="transform-origin:center center">Profond.</span></div>
<div class="gh" style="left:1881px;top:273px;width:62px;height:38px;line-height:37px;padding-top:1px;text-align:left;padding-left:15px"><span class="sx" style="transform-origin:left center">Poi</span></div>
<div class="rho" style="left:351px;top:311px;width:41px;height:54px;line-height:57px"><span class="sx" style="transform-origin:center center">1</span></div>
<div class="c" style="left:392px;top:311px;width:131px;height:54px;line-height:16px;padding-top:3px"><span class="sx" style="transform-origin:left center"></span></div>
<div class="c" style="left:523px;top:311px;width:131px;height:54px;line-height:16px;padding-top:3px"><span class="sx" style="transform-origin:left center">C231100052020001</span></div>
<div class="c" style="left:654px;top:311px;width:311px;height:54px;line-height:16px;padding-top:3px;padding-left:4px;white-space:pre"><span class="sx" style="transform-origin:left center">Fenêtre 1 vantail
 Hauteur 1350 Largeur 800 mm
-</span></div>
<div class="a" style="left:653px;top:311px;width:314px;height:55px;border:2px solid #1b1b1b;border-right-width:3px;border-bottom-width:3px"></div>
<div class="c" style="left:965px;top:311px;width:92px;height:54px;line-height:16px;padding-top:3px"><span class="sx" style="transform-origin:left center">2311280001</span></div>
<div class="c" style="left:1057px;top:311px;width:91px;height:54px"></div>
<div class="cb" style="left:1094px;top:329px;width:16px;height:16px"></div>
<div class="c" style="left:1148px;top:311px;width:51px;height:54px;line-height:16px;padding-top:3px"><span class="sx" style="transform-origin:left center">000052</span></div>
<div class="c" style="left:1199px;top:311px;width:111px;height:54px;line-height:16px;padding-top:3px"><span class="sx" style="transform-origin:left center">MENUISERIE JUIN</span></div>
<div class="c" style="left:1310px;top:311px;width:92px;height:54px;line-height:16px;padding-top:3px"><span class="sx" style="transform-origin:left center">C231100052</span></div>
<div class="c" style="left:1402px;top:311px;width:111px;height:54px;line-height:16px;padding-top:3px"><span class="sx" style="transform-origin:left center">Test GAC / Prepa</span></div>
<div class="c" style="left:1513px;top:311px;width:61px;height:54px;line-height:16px;padding-top:3px"><span class="sx" style="transform-origin:left center">01-EXP</span></div>
<div class="c" style="left:1574px;top:311px;width:71px;height:54px;line-height:16px;padding-top:3px"><span class="sx" style="transform-origin:left center">01-EXP</span></div>
<div class="c" style="left:1645px;top:311px;width:51px;height:54px;line-height:16px;padding-top:3px"><span class="sx" style="transform-origin:left center">LIG</span></div>
<div class="c" style="left:1696px;top:311px;width:62px;height:54px;line-height:16px"><span class="sx" style="position:absolute;right:3px;top:3px;transform-origin:right center">0,000</span></div>
<div class="c" style="left:1758px;top:311px;width:61px;height:54px;line-height:16px"><span class="sx" style="position:absolute;right:3px;top:3px;transform-origin:right center">0,000</span></div>
<div class="c" style="left:1819px;top:311px;width:62px;height:54px;line-height:16px"><span class="sx" style="position:absolute;right:3px;top:3px;transform-origin:right center">0,000</span></div>
<div class="c" style="left:1881px;top:311px;width:62px;height:54px;line-height:16px"><span class="sx" style="position:absolute;right:3px;top:3px;transform-origin:right center">0,000</span></div>
<div class="rh" style="left:351px;top:365px;width:41px;height:20px;line-height:23px"><span class="sx" style="transform-origin:center center">2</span></div>
<div class="c" style="left:392px;top:365px;width:131px;height:20px;line-height:16px;padding-top:3px"><span class="sx" style="transform-origin:left center"></span></div>
<div class="c" style="left:523px;top:365px;width:131px;height:20px;line-height:16px;padding-top:3px"><span class="sx" style="transform-origin:left center">C231100052070001</span></div>
<div class="c" style="left:654px;top:365px;width:311px;height:20px;line-height:16px;padding-top:3px"><span class="sx" style="transform-origin:left center">Menuiserie PVC H x L : 1000 x 1000 mm</span></div>
<div class="c" style="left:965px;top:365px;width:92px;height:20px;line-height:16px;padding-top:3px"><span class="sx" style="transform-origin:left center">2311280001</span></div>
<div class="c" style="left:1057px;top:365px;width:91px;height:20px"></div>
<div class="cb" style="left:1094px;top:367px;width:16px;height:16px"></div>
<div class="c" style="left:1148px;top:365px;width:51px;height:20px;line-height:16px;padding-top:3px"><span class="sx" style="transform-origin:left center">000052</span></div>
<div class="c" style="left:1199px;top:365px;width:111px;height:20px;line-height:16px;padding-top:3px"><span class="sx" style="transform-origin:left center">MENUISERIE JUIN</span></div>
<div class="c" style="left:1310px;top:365px;width:92px;height:20px;line-height:16px;padding-top:3px"><span class="sx" style="transform-origin:left center">C231100052</span></div>
<div class="c" style="left:1402px;top:365px;width:111px;height:20px;line-height:16px;padding-top:3px"><span class="sx" style="transform-origin:left center">Test GAC / Prepa</span></div>
<div class="c" style="left:1513px;top:365px;width:61px;height:20px;line-height:16px;padding-top:3px"><span class="sx" style="transform-origin:left center">01-EXP</span></div>
<div class="c" style="left:1574px;top:365px;width:71px;height:20px;line-height:16px;padding-top:3px"><span class="sx" style="transform-origin:left center">01-EXP</span></div>
<div class="c" style="left:1645px;top:365px;width:51px;height:20px;line-height:16px;padding-top:3px"><span class="sx" style="transform-origin:left center">LIG</span></div>
<div class="c" style="left:1696px;top:365px;width:62px;height:20px;line-height:16px"><span class="sx" style="position:absolute;right:3px;top:3px;transform-origin:right center">1000,000</span></div>
<div class="c" style="left:1758px;top:365px;width:61px;height:20px;line-height:16px"><span class="sx" style="position:absolute;right:3px;top:3px;transform-origin:right center">1000,000</span></div>
<div class="c" style="left:1819px;top:365px;width:62px;height:20px;line-height:16px"><span class="sx" style="position:absolute;right:3px;top:3px;transform-origin:right center">200,000</span></div>
<div class="c" style="left:1881px;top:365px;width:62px;height:20px;line-height:16px"><span class="sx" style="position:absolute;right:3px;top:3px;transform-origin:right center">4,500</span></div>
<div class="rh" style="left:351px;top:385px;width:41px;height:20px;line-height:23px"><span class="sx" style="transform-origin:center center">3</span></div>
<div class="c" style="left:392px;top:385px;width:131px;height:20px;line-height:16px;padding-top:3px"><span class="sx" style="transform-origin:left center"></span></div>
<div class="c" style="left:523px;top:385px;width:131px;height:20px;line-height:16px;padding-top:3px"><span class="sx" style="transform-origin:left center">C231100052080001</span></div>
<div class="c" style="left:654px;top:385px;width:311px;height:20px;line-height:16px;padding-top:3px"><span class="sx" style="transform-origin:left center">Menuiserie PVC H x L : 2200 x 2000 mm</span></div>
<div class="c" style="left:965px;top:385px;width:92px;height:20px;line-height:16px;padding-top:3px"><span class="sx" style="transform-origin:left center">2311280001</span></div>
<div class="c" style="left:1057px;top:385px;width:91px;height:20px"></div>
<div class="cb" style="left:1094px;top:387px;width:16px;height:16px"></div>
<div class="c" style="left:1148px;top:385px;width:51px;height:20px;line-height:16px;padding-top:3px"><span class="sx" style="transform-origin:left center">000052</span></div>
<div class="c" style="left:1199px;top:385px;width:111px;height:20px;line-height:16px;padding-top:3px"><span class="sx" style="transform-origin:left center">MENUISERIE JUIN</span></div>
<div class="c" style="left:1310px;top:385px;width:92px;height:20px;line-height:16px;padding-top:3px"><span class="sx" style="transform-origin:left center">C231100052</span></div>
<div class="c" style="left:1402px;top:385px;width:111px;height:20px;line-height:16px;padding-top:3px"><span class="sx" style="transform-origin:left center">Test GAC / Prepa</span></div>
<div class="c" style="left:1513px;top:385px;width:61px;height:20px;line-height:16px;padding-top:3px"><span class="sx" style="transform-origin:left center">01-EXP</span></div>
<div class="c" style="left:1574px;top:385px;width:71px;height:20px;line-height:16px;padding-top:3px"><span class="sx" style="transform-origin:left center">01-EXP</span></div>
<div class="c" style="left:1645px;top:385px;width:51px;height:20px;line-height:16px;padding-top:3px"><span class="sx" style="transform-origin:left center">LIG</span></div>
<div class="c" style="left:1696px;top:385px;width:62px;height:20px;line-height:16px"><span class="sx" style="position:absolute;right:3px;top:3px;transform-origin:right center">2200,000</span></div>
<div class="c" style="left:1758px;top:385px;width:61px;height:20px;line-height:16px"><span class="sx" style="position:absolute;right:3px;top:3px;transform-origin:right center">2000,000</span></div>
<div class="c" style="left:1819px;top:385px;width:62px;height:20px;line-height:16px"><span class="sx" style="position:absolute;right:3px;top:3px;transform-origin:right center">200,000</span></div>
<div class="c" style="left:1881px;top:385px;width:62px;height:20px;line-height:16px"><span class="sx" style="position:absolute;right:3px;top:3px;transform-origin:right center">108,000</span></div>
<div class="rh" style="left:351px;top:405px;width:41px;height:20px;line-height:23px"><span class="sx" style="transform-origin:center center">4</span></div>
<div class="c" style="left:392px;top:405px;width:131px;height:20px;line-height:16px;padding-top:3px"><span class="sx" style="transform-origin:left center"></span></div>
<div class="c" style="left:523px;top:405px;width:131px;height:20px;line-height:16px;padding-top:3px"><span class="sx" style="transform-origin:left center">COL231127000672</span></div>
<div class="c" style="left:654px;top:405px;width:311px;height:20px;line-height:16px;padding-top:3px"><span class="sx" style="transform-origin:left center">Colis Quincaillerie</span></div>
<div class="c" style="left:965px;top:405px;width:92px;height:20px;line-height:16px;padding-top:3px"><span class="sx" style="transform-origin:left center">2311280001</span></div>
<div class="c" style="left:1057px;top:405px;width:91px;height:20px"></div>
<div class="cb" style="left:1094px;top:407px;width:16px;height:16px"></div>
<div class="c" style="left:1148px;top:405px;width:51px;height:20px;line-height:16px;padding-top:3px"><span class="sx" style="transform-origin:left center">000052</span></div>
<div class="c" style="left:1199px;top:405px;width:111px;height:20px;line-height:16px;padding-top:3px"><span class="sx" style="transform-origin:left center">MENUISERIE JUIN</span></div>
<div class="c" style="left:1310px;top:405px;width:92px;height:20px;line-height:16px;padding-top:3px"><span class="sx" style="transform-origin:left center">C231100052</span></div>
<div class="c" style="left:1402px;top:405px;width:111px;height:20px;line-height:16px;padding-top:3px"><span class="sx" style="transform-origin:left center">Test GAC / Prepa</span></div>
<div class="c" style="left:1513px;top:405px;width:61px;height:20px;line-height:16px;padding-top:3px"><span class="sx" style="transform-origin:left center">01-EXP</span></div>
<div class="c" style="left:1574px;top:405px;width:71px;height:20px;line-height:16px;padding-top:3px"><span class="sx" style="transform-origin:left center">01-EXP</span></div>
<div class="c" style="left:1645px;top:405px;width:51px;height:20px;line-height:16px;padding-top:3px"><span class="sx" style="transform-origin:left center">QUI</span></div>
<div class="c" style="left:1696px;top:405px;width:62px;height:20px;line-height:16px"><span class="sx" style="position:absolute;right:3px;top:3px;transform-origin:right center">0,000</span></div>
<div class="c" style="left:1758px;top:405px;width:61px;height:20px;line-height:16px"><span class="sx" style="position:absolute;right:3px;top:3px;transform-origin:right center">0,000</span></div>
<div class="c" style="left:1819px;top:405px;width:62px;height:20px;line-height:16px"><span class="sx" style="position:absolute;right:3px;top:3px;transform-origin:right center">0,000</span></div>
<div class="c" style="left:1881px;top:405px;width:62px;height:20px;line-height:16px"><span class="sx" style="position:absolute;right:3px;top:3px;transform-origin:right center">2,000</span></div>
<div class="rh" style="left:351px;top:425px;width:41px;height:20px;line-height:23px"><span class="sx" style="transform-origin:center center">5</span></div>
<div class="c" style="left:392px;top:425px;width:131px;height:20px;line-height:16px;padding-top:3px"><span class="sx" style="transform-origin:left center">PAL231128000679</span></div>
<div class="c" style="left:523px;top:425px;width:131px;height:20px;line-height:16px;padding-top:3px"><span class="sx" style="transform-origin:left center">C231100052010001</span></div>
<div class="c" style="left:654px;top:425px;width:311px;height:20px;line-height:16px;padding-top:3px"><span class="sx" style="transform-origin:left center">Menuiserie PVC H x L : 1500 x 1200 mm</span></div>
<div class="c" style="left:965px;top:425px;width:92px;height:20px;line-height:16px;padding-top:3px"><span class="sx" style="transform-origin:left center">2311280001</span></div>
<div class="c" style="left:1057px;top:425px;width:91px;height:20px"></div>
<div class="cb" style="left:1094px;top:427px;width:16px;height:16px"></div>
<div class="c" style="left:1148px;top:425px;width:51px;height:20px;line-height:16px;padding-top:3px"><span class="sx" style="transform-origin:left center">000052</span></div>
<div class="c" style="left:1199px;top:425px;width:111px;height:20px;line-height:16px;padding-top:3px"><span class="sx" style="transform-origin:left center">MENUISERIE JUIN</span></div>
<div class="c" style="left:1310px;top:425px;width:92px;height:20px;line-height:16px;padding-top:3px"><span class="sx" style="transform-origin:left center">C231100052</span></div>
<div class="c" style="left:1402px;top:425px;width:111px;height:20px;line-height:16px;padding-top:3px"><span class="sx" style="transform-origin:left center">Test GAC / Prepa</span></div>
<div class="c" style="left:1513px;top:425px;width:61px;height:20px;line-height:16px;padding-top:3px"><span class="sx" style="transform-origin:left center">01-EXP</span></div>
<div class="c" style="left:1574px;top:425px;width:71px;height:20px;line-height:16px;padding-top:3px"><span class="sx" style="transform-origin:left center">01-EXP</span></div>
<div class="c" style="left:1645px;top:425px;width:51px;height:20px;line-height:16px;padding-top:3px"><span class="sx" style="transform-origin:left center">LIG</span></div>
<div class="c" style="left:1696px;top:425px;width:62px;height:20px;line-height:16px"><span class="sx" style="position:absolute;right:3px;top:3px;transform-origin:right center">1500,000</span></div>
<div class="c" style="left:1758px;top:425px;width:61px;height:20px;line-height:16px"><span class="sx" style="position:absolute;right:3px;top:3px;transform-origin:right center">1200,000</span></div>
<div class="c" style="left:1819px;top:425px;width:62px;height:20px;line-height:16px"><span class="sx" style="position:absolute;right:3px;top:3px;transform-origin:right center">200,000</span></div>
<div class="c" style="left:1881px;top:425px;width:62px;height:20px;line-height:16px"><span class="sx" style="position:absolute;right:3px;top:3px;transform-origin:right center">0,000</span></div>
<div class="rh" style="left:351px;top:445px;width:41px;height:20px;line-height:23px"><span class="sx" style="transform-origin:center center">6</span></div>
<div class="c" style="left:392px;top:445px;width:131px;height:20px;line-height:16px;padding-top:3px"><span class="sx" style="transform-origin:left center">PAL231128000679</span></div>
<div class="c" style="left:523px;top:445px;width:131px;height:20px;line-height:16px;padding-top:3px"><span class="sx" style="transform-origin:left center">C231100052010002</span></div>
<div class="c" style="left:654px;top:445px;width:311px;height:20px;line-height:16px;padding-top:3px"><span class="sx" style="transform-origin:left center">Menuiserie PVC H x L : 1500 x 1200 mm</span></div>
<div class="c" style="left:965px;top:445px;width:92px;height:20px;line-height:16px;padding-top:3px"><span class="sx" style="transform-origin:left center">2311280001</span></div>
<div class="c" style="left:1057px;top:445px;width:91px;height:20px"></div>
<div class="cb" style="left:1094px;top:447px;width:16px;height:16px"></div>
<div class="c" style="left:1148px;top:445px;width:51px;height:20px;line-height:16px;padding-top:3px"><span class="sx" style="transform-origin:left center">000052</span></div>
<div class="c" style="left:1199px;top:445px;width:111px;height:20px;line-height:16px;padding-top:3px"><span class="sx" style="transform-origin:left center">MENUISERIE JUIN</span></div>
<div class="c" style="left:1310px;top:445px;width:92px;height:20px;line-height:16px;padding-top:3px"><span class="sx" style="transform-origin:left center">C231100052</span></div>
<div class="c" style="left:1402px;top:445px;width:111px;height:20px;line-height:16px;padding-top:3px"><span class="sx" style="transform-origin:left center">Test GAC / Prepa</span></div>
<div class="c" style="left:1513px;top:445px;width:61px;height:20px;line-height:16px;padding-top:3px"><span class="sx" style="transform-origin:left center">01-EXP</span></div>
<div class="c" style="left:1574px;top:445px;width:71px;height:20px;line-height:16px;padding-top:3px"><span class="sx" style="transform-origin:left center">01-EXP</span></div>
<div class="c" style="left:1645px;top:445px;width:51px;height:20px;line-height:16px;padding-top:3px"><span class="sx" style="transform-origin:left center">LIG</span></div>
<div class="c" style="left:1696px;top:445px;width:62px;height:20px;line-height:16px"><span class="sx" style="position:absolute;right:3px;top:3px;transform-origin:right center">1500,000</span></div>
<div class="c" style="left:1758px;top:445px;width:61px;height:20px;line-height:16px"><span class="sx" style="position:absolute;right:3px;top:3px;transform-origin:right center">1200,000</span></div>
<div class="c" style="left:1819px;top:445px;width:62px;height:20px;line-height:16px"><span class="sx" style="position:absolute;right:3px;top:3px;transform-origin:right center">200,000</span></div>
<div class="c" style="left:1881px;top:445px;width:62px;height:20px;line-height:16px"><span class="sx" style="position:absolute;right:3px;top:3px;transform-origin:right center">46,000</span></div>
<div class="a" style="left:1917px;top:270px;width:2px;height:339px;background:#6f6f6f"></div><div class="a" style="left:1919px;top:214px;width:1px;height:810px;background:#f0f0f0"></div>
<div class="a" style="left:392px;top:405px;width:1px;height:19px;background:#f0a040"></div>
<div class="a" style="left:351px;top:585px;width:1564px;height:20px;background:#7097c2;border-top:1px solid #6a8fbd;border-bottom:1px solid #6a8fbd"></div>
<div class="a" style="left:370px;top:585px;width:881px;height:20px;background:linear-gradient(#e0e9f9 50%,#c9daf1 50%);border:1px solid #6f80a8;border-left:none"></div>
<div class="a" style="left:351px;top:585px;width:20px;height:20px;background:linear-gradient(#e0e9f9 50%,#c9daf1 50%);border:1px solid #5a78a6"></div>
<svg style="left:357px;top:590px" width="6" height="11" viewBox="0 0 6 11"><path d="M6 0V11L0 5.5Z" fill="#2e3a4e"/></svg>
<div class="a" style="left:1895px;top:585px;width:20px;height:20px;background:linear-gradient(#e0e9f9 50%,#c9daf1 50%);border:1px solid #4a6a96"></div>
<svg style="left:1903px;top:590px" width="6" height="11" viewBox="0 0 6 11"><path d="M0 0V11L6 5.5Z" fill="#2e3a4e"/></svg>
<div class="btn" style="left:355px;top:617px;width:109px;height:25px"></div>
<svg style="left:381px;top:623px" width="14" height="12" viewBox="0 0 14 12"><path d="M1.5 6L5.5 10L12.5 2" stroke="#2fb3bd" stroke-width="2.6" fill="none"/></svg>
<div class="t" style="left:401px;top:622px;font-size:16px;color:#151515;transform:scaleX(.83);transform-origin:left center">Valider</div>
<div class="btn" style="left:469px;top:617px;width:109px;height:25px"></div>
<svg style="left:492px;top:622px" width="14" height="14" viewBox="0 0 14 14"><path d="M1.5 1.5L12.5 12.5M12.5 1.5L1.5 12.5" stroke="#ee4f2e" stroke-width="3"/></svg>
<div class="t" style="left:512px;top:622px;font-size:16px;color:#151515;transform:scaleX(.83);transform-origin:left center">Annuler</div>
<div class="btn" style="left:583px;top:617px;width:108px;height:25px"></div>
<div class="t" style="left:594px;top:622px;font-size:16px;color:#151515;transform:scaleX(.83);transform-origin:left center">Accès Gestion</div>
<div class="a" style="left:348px;top:647px;width:1571px;height:340px;background:#6f6f6f;border-bottom:2px solid #858585"></div>
<div class="a" style="left:348px;top:647px;width:1569px;height:6px;background:#8d8d8d"></div>
<div class="a" style="left:351px;top:655px;width:1566px;height:330px;background:#fdfdfb"></div>
<div class="a" style="left:351px;top:655px;width:40px;height:22px;background:#a9c5e6;border-bottom:1px solid #9fbbe0"></div>
<svg style="left:376px;top:663px" width="10" height="10" viewBox="0 0 11 11"><path d="M11 0V11H0Z" fill="#f4f8fd"/></svg>
<div class="gho" style="left:391px;top:655px;width:62px;height:22px;line-height:22px"><span class="sx" style="transform-origin:center center">Quantité</span></div>
<div class="gh" style="left:453px;top:655px;width:51px;height:22px;line-height:22px"><span class="sx" style="transform-origin:center center">Unité</span></div>
<div class="gh" style="left:504px;top:655px;width:161px;height:22px;line-height:22px"><span class="sx" style="transform-origin:center center">Article</span></div>
<div class="gh" style="left:665px;top:655px;width:512px;height:22px;line-height:22px"><span class="sx" style="transform-origin:center center">Désignation</span></div>
<div class="rho" style="left:351px;top:677px;width:40px;height:22px;line-height:22px"><span class="sx">1</span></div>
<div class="c" style="left:391px;top:677px;width:62px;height:22px;line-height:21px"><span class="sx" style="position:absolute;right:3px;top:0;transform-origin:right center">1,000</span></div>
<div class="c" style="left:453px;top:677px;width:51px;height:22px;line-height:21px"><span class="sx" style="transform-origin:left center">Un</span></div>
<div class="c" style="left:504px;top:677px;width:161px;height:22px;line-height:21px"><span class="sx" style="transform-origin:left center">C231100052/02</span></div>
<div class="c" style="left:665px;top:677px;width:512px;height:22px;line-height:21px"><span class="sx" style="transform-origin:left center">Fenêtre 1 vantail</span></div>
<div class="a" style="left:392px;top:678px;width:63px;height:21px;border:2px solid #151515;border-left-width:2px;border-right-width:3px"></div>
<div class="a" style="left:355px;top:994px;width:83px;height:25px;background:#cdcdcd;border:1px solid #c3c3c3"></div>
<svg style="left:367px;top:999px" width="14" height="14" viewBox="0 0 14 14"><path d="M1.5 1.5L12.5 12.5M12.5 1.5L1.5 12.5" stroke="#a2a2a2" stroke-width="3"/></svg>
<div class="t" style="left:388px;top:999px;font-size:16px;color:#6e6e6e;transform:scaleX(.83);transform-origin:left center">Fermer</div>
<svg style="left:1898px;top:1032px" width="12" height="12" viewBox="0 0 12 12"><g fill="#6f95c8"><rect x="9" y="1" width="2" height="2"/><rect x="6" y="5" width="2" height="2"/><rect x="9" y="5" width="2" height="2"/><rect x="2" y="9" width="2" height="2"/><rect x="6" y="9" width="2" height="2"/><rect x="9" y="9" width="2" height="2"/></g></svg>
<svg style="left:340px;top:605px" width="6" height="25" viewBox="0 0 6 25"><g stroke="#5b90c4" stroke-width="1.2"><path d="M1 4L4 2M1 9L4 7M1 14L4 12M1 19L4 17M1 24L4 22"/></g></svg>
<div class="a" style="left:1470px;top:628px;width:95px;height:95px;border-radius:50%;background:rgba(248,246,0,0.88)"></div>
<svg style="left:1515px;top:675px" width="28" height="42" viewBox="0 0 28 42"><path d="M1.5 1.5V32L8.5 25L14.5 38.5L20 36L14 23H24Z" fill="#ececf0" stroke="#111" stroke-width="2.4" stroke-linejoin="round"/></svg>

<!-- STATUS -->
<div class="a" style="left:0;top:1024px;width:1920px;height:28px;background:#edf1f7;border-top:1px solid #f6f8fb"></div>
</body></html>
